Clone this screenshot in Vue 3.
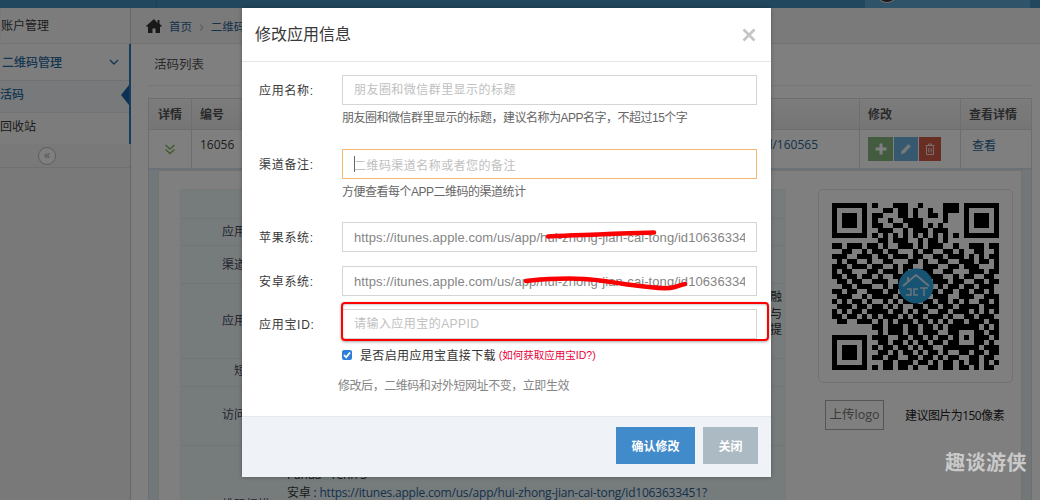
<script setup>
const raw = [
"111111101000111001000011101111111","100000100011011010010011101000001","101110101100011010011010001011101",
"101110111001001111000010001011101","101110101100110111010100001011101","100000100111001011101110001000001",
"111111101010101010101010101111111","000000000110111001011010000000000",
"110111011010011101011100100111011","001100101101100010110011010011001","111001110110111011001101110101011",
"010110010011000110100110011101101","111011101100101100111001101110001","101100011011101011110011000111011",
"110110110100110100011100101100110","011011001110011011101110110011011","001101110010110110110101101101110",
"110110011101101101011011011011010","011100101111011001101110011100111","101011010010101110110110101001101",
"011101101101010011011011011110111","101011011110110101100110111010101","110110101011101011011101001101110",
"011001110101011101101010110111011","000000001101110110110101111110101","111111100101110110111001100011011",
"100000101110011011010110101011101","101110100110110101101101100011010","101110101011011010110011111110111",
"101110100110101101011010011011011","100000101101100110110101100110110","111111100011011101101011010110101",
"111111101011011010011011011010110"
]
const isDark = (r, c) => {
  const finder = (y, x) => {
    const a = r - y, b = c - x
    if (a < -1 || b < -1 || a > 7 || b > 7) return null
    if (a < 0 || b < 0 || a > 6 || b > 6) return false
    return a === 0 || b === 0 || a === 6 || b === 6 || (a > 1 && a < 5 && b > 1 && b < 5)
  }
  for (const f of [finder(0, 0), finder(0, 26), finder(26, 0)]) if (f !== null) return f
  if (r >= 24 && r <= 28 && c >= 24 && c <= 28) {
    return r === 24 || r === 28 || c === 24 || c === 28 || (r === 26 && c === 26)
  }
  return raw[r][c] === "1"
}
const cells = []
for (let r = 0; r < 33; r++) for (let c = 0; c < 33; c++) if (isDark(r, c)) cells.push({ r, c })

const rows = [
  { label: "应用名称", cls: "r1" },
  { label: "渠道备注", cls: "r2" },
  { label: "应用下载", cls: "r3", side: ["融", "与", "提"] },
  { label: "短网址", cls: "r4" },
  { label: "访问统计", cls: "r5" },
]
const urlValue = "https://itunes.apple.com/us/app/hui-zhong-jian-cai-tong/id1063633451?"
</script>

<template>
  <div class="page">
    <div class="topbar">
      <span class="top-line"></span>
      <span class="top-right"><span class="avatar"></span></span>
    </div>
    <div class="shell">
      <aside class="side">
        <div class="nav-head">账户管理</div>
        <div class="nav-group">
          <div class="nav-title">
            <span>二维码管理</span>
            <svg width="10" height="6" viewBox="0 0 10 6"><path d="M1 1l4 4 4-4" fill="none" stroke="#2b6da3" stroke-width="1.400"/></svg>
          </div>
          <div class="nav-sub active">活码</div>
          <div class="nav-sub">回收站</div>
          <span class="nav-arrow"></span>
        </div>
        <div class="collapse"><span class="collapse-btn">«</span></div>
      </aside>
      <main class="main">
        <div class="crumbs">
          <svg width="16" height="14" viewBox="0 0 16 14"><path d="M8 0L0 7l1 1 1-.8V14h4.500V9.500h3V14H14V7.200l1 .8 1-1-2.500-2.200V1h-2v3L8 0z" fill="#333"/></svg>
          <a>首页</a><span class="sep">›</span><a>二维码管理</a>
        </div>
        <div class="content">
          <h3 class="page-title">活码列表</h3>
          <div class="table">
            <div class="tr head">
              <div class="td center">详情</div><div class="td">编号</div><div class="td"></div><div class="td">修改</div><div class="td">查看详情</div>
            </div>
            <div class="tr body">
              <div class="td center">
                <svg width="12" height="11" viewBox="0 0 12 11"><path d="M1.500 1l4.500 4 4.500-4M1.500 5.500l4.500 4 4.500-4" fill="none" stroke="#7fb457" stroke-width="1.400"/></svg>
              </div>
              <div class="td">16056</div>
              <div class="td linkcell"><a>http://d.jct.cn/l/160565</a></div>
              <div class="td actions">
                <span class="act green">
                  <svg width="12" height="12" viewBox="0 0 12 12"><path d="M6 .5v11M.5 6h11" stroke="#fff" stroke-width="3"/></svg>
                </span>
                <span class="act blue">
                  <svg width="12" height="12" viewBox="0 0 12 12"><path d="M1 11l.6-3L8.500 1.100l2.400 2.400L4 10.400 1 11z" fill="#eaf2f8"/></svg>
                </span>
                <span class="act red">
                  <svg width="10" height="12" viewBox="0 0 10 12"><path d="M.5 2.500h9M3.500 2.500V1h3v1.500M1.500 2.500v9h7v-9M3.800 5v4.500M6.200 5v4.500" fill="none" stroke="#f3dcd8" stroke-width="1"/></svg>
                </span>
              </div>
              <div class="td view"><a>查看</a></div>
            </div>
            <div class="detail">
              <div class="detail-inner">
                <div class="info">
                  <div class="info-top"></div>
                  <div v-for="row in rows" :key="row.label" class="info-row" :class="row.cls">
                    <span class="info-label">{{ row.label }}</span>
                    <span v-if="row.side" class="side-text"><i v-for="s in row.side" :key="s">{{ s }}</i></span>
                  </div>
                  <div class="info-row r6">
                    <span class="info-label">二维码扫描</span>
                    <span class="android">
                      <span class="android-line">Panda · Tenn 3</span>
                      <span class="android-line">安卓 : <a>{{ urlValue }}</a></span>
                    </span>
                  </div>
                </div>
                <div class="qr-col">
                  <div class="qr-card">
                    <svg class="qr" width="167" height="167" viewBox="0 0 33 33" shape-rendering="crispEdges">
                      <rect v-for="cell in cells" :key="cell.r + '-' + cell.c" :x="cell.c" :y="cell.r" width="1" height="1" fill="#000"/>
                    </svg>
                    <svg class="qr-logo" width="36" height="36" viewBox="0 0 36 36">
                      <circle cx="18" cy="18" r="17.500" fill="#2fa6e4"/>
                      <path d="M5 18L18 7l13 11M10 14V9" fill="none" stroke="#d5e9f4" stroke-width="1.800"/>
                      <path d="M9 21h4v6H8M20 21h-4v6h4M22 20h8M26 20v8" fill="none" stroke="#d5e9f4" stroke-width="1.500"/>
                    </svg>
                  </div>
                  <div class="upload">
                    <span class="upload-btn">上传logo</span>
                    <span class="upload-hint">建议图片为150像素</span>
                  </div>
                </div>
              </div>
            </div>
          </div>
        </div>
      </main>
    </div>

    <div class="backdrop"></div>
    <div class="modal">
      <div class="modal-head">
        <span class="modal-title">修改应用信息</span>
        <svg class="close" width="14" height="14" viewBox="0 0 14 14"><path d="M1.500 1.500l11 11M12.500 1.500l-11 11" stroke="#c4c4c4" stroke-width="2.600"/></svg>
      </div>
      <div class="modal-body">
        <div class="field f1">
          <label class="lbl">应用名称:</label>
          <div class="ctrl">
            <input class="inp" placeholder="朋友圈和微信群里显示的标题" />
            <p class="help">朋友圈和微信群里显示的标题，建议名称为APP名字，不超过15个字</p>
          </div>
        </div>
        <div class="field f2">
          <label class="lbl">渠道备注:</label>
          <div class="ctrl">
            <div class="inp focus"><span class="caret"></span><span class="ph">二维码渠道名称或者您的备注</span></div>
            <p class="help">方便查看每个APP二维码的渠道统计</p>
          </div>
        </div>
        <div class="field f3">
          <label class="lbl">苹果系统:</label>
          <div class="ctrl"><input class="inp url" :value="urlValue" /></div>
        </div>
        <div class="field f4">
          <label class="lbl">安卓系统:</label>
          <div class="ctrl"><input class="inp url" :value="urlValue" /></div>
        </div>
        <div class="field f5">
          <label class="lbl">应用宝ID:</label>
          <div class="ctrl"><input class="inp" placeholder="请输入应用宝的APPID" /></div>
        </div>
        <div class="check-row">
          <span class="checkbox">
            <svg width="10" height="10" viewBox="0 0 10 10"><path d="M2 5l2.200 2.300L8 2.500" fill="none" stroke="#fff" stroke-width="1.800"/></svg>
          </span>
          <span class="check-text">是否启用应用宝直接下载</span>
          <span class="check-link">(如何获取应用宝ID?)</span>
        </div>
        <p class="note">修改后，二维码和对外短网址不变，立即生效</p>
      </div>
      <div class="modal-foot">
        <button class="btn primary">确认修改</button>
        <button class="btn gray">关闭</button>
      </div>
    </div>

    <div class="highlight"></div>
    <svg class="scribble" width="1040" height="500" viewBox="0 0 1040 500">
      <path d="M548 236.500c30-1.500 45-1.500 60-2.500s30-1 46-1.500" fill="none" stroke="#fb0000" stroke-width="4.500" stroke-linecap="round"/>
      <path d="M526 281c20-2 40-3 58-2s25 3 40 5 32 5 46 4c6-.5 10-3 15-4" fill="none" stroke="#fb0000" stroke-width="4.500" stroke-linecap="round"/>
    </svg>
    <span class="watermark">趣谈游侠</span>
  </div>
</template>

<style>
html, body { margin: 0; overflow: hidden; background: #fff; }
</style>

<style scoped>
.page { position: relative; width: 1040px; height: 500px; overflow: hidden; background: #fff;
  font: 12px "Open Sans", "Noto Sans CJK SC", sans-serif; color: #393939; }
a { color: #2a6496; }
p, h3 { margin: 0; }

.topbar { height: 8px; background: #438fbd; display: flex; justify-content: space-between; overflow: hidden; }
.top-line { width: 1px; height: 8px; margin-left: 156px; background: #3a7da6; }
.top-right { position: relative; width: 165px; margin-right: 10px; background: #5fa8d3; height: 8px; }
.avatar { position: absolute; left: 13px; top: -11px; width: 16px; height: 12px; border-radius: 50%; background: #333; border: 1px solid #ddd; }
.shell { display: flex; height: 492px; }

.side { width: 130px; flex: none; background: #f2f2f2; border-right: 1px solid #ccc; }
.nav-head { height: 35px; line-height: 35px; margin-left: 1px; background: #f8f8f8; border-bottom: 1px solid #e5e5e5; font-size: 12px; white-space: nowrap; }
.nav-group { position: relative; border-right: 2px solid #2b7dbc; margin-right: -1px; }
.nav-title { height: 36px; display: flex; align-items: center; justify-content: space-between; padding: 0 10px 0 2px; background: #fafafa; border-bottom: 1px solid #e5e5e5; color: #2b6da3; font-weight: 500; }
.nav-sub { height: 31px; line-height: 28px; margin-left: -3px; padding-left: 3px; background: #f9f9f9; white-space: nowrap; overflow: hidden; }
.nav-sub.active { background: #eef3f7; color: #2b6da3; font-weight: 500; border-bottom: 1px dotted #d8dfe5; }
.nav-arrow { position: absolute; right: 0; top: 41px; border: 10.500px solid transparent; border-right: 8px solid #1963aa; border-left: 0; }
.collapse { height: 23px; display: flex; align-items: center; justify-content: center; background: #f3f3f3; border-bottom: 1px solid #e0e0e0; padding-right: 36px; }
.collapse-btn { width: 16px; height: 16px; line-height: 13px; border: 1px solid #bbb; border-radius: 50%; background: #fff; color: #aaa; text-align: center; font-size: 13px; }

.main { flex: 1; min-width: 0; }
.crumbs { height: 35px; display: flex; align-items: center; gap: 7px; padding-left: 15px; background: #f5f5f5; border-bottom: 1px solid #e5e5e5; font-size: 11.500px; white-space: nowrap; }
.sep { color: #bbb; font-size: 16px; }
.content { padding: 0 8px 0 17px; }
.page-title { height: 41px; line-height: 42px; font-size: 12.500px; font-weight: 400; color: #555; border-bottom: 1px dotted #e2e2e2; margin: 0 0 12px; padding-left: 6px; }

.table { border: 1px solid #ddd; }
.tr { display: grid; grid-template-columns: 42px 60px 1fr 101px 71px; }
.tr.head { height: 30px; background: linear-gradient(#f8f8f8, #ececec); border-bottom: 1px solid #ddd; font-weight: 600; color: #555; }
.tr.body { height: 38px; background: #fff; }
.td { padding: 0 8px; border-left: 1px solid #ddd; display: flex; align-items: center; white-space: nowrap; overflow: hidden; }
.td:first-child { border-left: 0; }
.td.center { justify-content: center; padding: 0; }
.tr.body .td { align-items: flex-start; padding-top: 6px; }
.tr.body .td.center { align-items: center; padding-top: 0; }
.linkcell { justify-content: flex-end; padding-right: 41px !important; }
.td.actions { gap: 1px; padding: 7px 0 0 8px !important; }
.td.view { padding-left: 11px; }
.act { height: 24px; display: flex; align-items: center; justify-content: center; box-sizing: border-box; }
.act.green { width: 25px; background: #87b87f; }
.act.blue { width: 24px; background: #6fb3e0; }
.act.red { width: 22px; background: #d15b47; }

.detail { border-top: 2px solid #d4e4ee; background: #e4eff5; padding: 0 9px; }
.detail-inner { height: 340px; background: #fff; border: 1px solid #e4e4e4; border-bottom: 0; padding: 18px 0 0 21px; display: flex; }
.info { width: 606px; flex: none; background: #edf6f8; border: 1px solid #f0f0f0; border-bottom: 0; height: 322px; box-sizing: border-box; }
.info-top { height: 28px; border-bottom: 1px solid #e4e9ec; }
.info-row { display: flex; align-items: center; justify-content: space-between; padding-bottom: 2px; border-bottom: 1px solid #e4e9ec; box-sizing: border-box; color: #4a4a62; }
.info-label { width: 89px; text-align: right; flex: none; }
.r1 { height: 27px; } .r2 { height: 38px; } .r3 { height: 75px; }
.r4 { height: 28px; padding-bottom: 6px; }
.r5 { height: 59px; padding-bottom: 4px; }
.r6 { height: 70px; padding-bottom: 0; border: 0; align-items: flex-start; justify-content: flex-start; }
.r6 .info-label { margin-top: 49px; }
.android { display: flex; flex-direction: column; margin: 21px 0 0 17px; line-height: 16px; letter-spacing: -.2px; white-space: nowrap; color: #393939; }
.android-line { height: 18px; }
.side-text { display: flex; flex-direction: column; margin: -12px 3px 0 0; font-size: 12px; line-height: 16.500px; color: #333; }
.side-text i { font-style: normal; }

.qr-col { width: 195px; margin-left: 32px; flex: none; }
.qr-card { position: relative; height: 194px; box-sizing: border-box; background: #fff; border: 1px solid #e4e4e4; border-radius: 5px; display: flex; align-items: center; justify-content: center; }
.qr { filter: blur(.4px); }
.qr-logo { position: absolute; left: 79px; top: 78px; }
.upload { display: flex; align-items: center; gap: 21px; margin: 17px 0 0 7px; }
.upload-btn { width: 57px; height: 28px; line-height: 28px; text-align: center; font-size: 12.500px; border: 1px solid #aaa; color: #777; }
.upload-hint { white-space: nowrap; font-size: 12px; color: #222; letter-spacing: -.55px; }

.backdrop { position: absolute; inset: 0; background: rgba(0, 0, 0, .5); }

.modal { position: absolute; left: 242px; top: 8px; width: 529px; height: 469px; background: #fff; display: flex; flex-direction: column; box-shadow: 0 0 4px rgba(0,0,0,.3);
  font-family: "Liberation Sans", "Noto Sans CJK SC", sans-serif; }
.modal-head { height: 54px; flex: none; box-sizing: border-box; border-bottom: 1px solid #e5e5e5; display: flex; align-items: center; justify-content: space-between; padding: 0 15px 4px 13px; }
.modal-title { font-size: 16px; color: #393939; }
.close { margin-top: 4px; }
.modal-body { flex: 1; padding-top: 13px; }
.field { display: flex; }
.lbl { width: 100px; flex: none; padding-left: 17px; box-sizing: border-box; line-height: 32px; font-size: 12px; letter-spacing: .7px; color: #393939; }
.ctrl { width: 415px; }
.inp { display: block; width: 415px; height: 30px; box-sizing: border-box; border: 1px solid #d5d5d5; padding: 0 11px; font: 12px "Liberation Sans", "Noto Sans CJK SC", sans-serif; color: #858585; background: #fff; outline: 0; letter-spacing: .45px; border-radius: 0; }
.inp::placeholder { color: #c0c0c0; opacity: 1; }
.inp.url { font-size: 13px; letter-spacing: .08px; }
.inp.focus { border-color: #f5b771; display: flex; align-items: center; position: relative; }
.caret { position: absolute; left: 11px; top: 6px; width: 1px; height: 16px; background: #666; }
.ph { color: #c0c0c0; }
.help { margin-top: 5px; height: 17px; line-height: 17px; font-size: 12px; letter-spacing: -.5px; color: #666; white-space: nowrap; }
.f1 { height: 74px; }
.f2 { height: 73px; }
.f3 { height: 44px; }
.f4 { height: 43px; }
.f5 { height: 40px; }
.check-row { display: flex; align-items: center; margin-left: 100px; height: 11px; }
.checkbox { width: 10px; height: 10px; background: #2d7fd8; border-radius: 2px; display: flex; }
.check-text { margin-left: 8px; font-size: 12px; letter-spacing: .35px; color: #333; white-space: nowrap; }
.check-link { margin-left: 3px; font-size: 10.500px; color: #e8003a; white-space: nowrap; }
.note { margin: 17px 0 0 96px; line-height: 18px; color: #858585; font-size: 12px; white-space: nowrap; letter-spacing: -.45px; }
.modal-foot { height: 61px; flex: none; box-sizing: border-box; background: #eff3f8; border-top: 1px solid #e4e9ee; display: flex; justify-content: flex-end; align-items: flex-start; gap: 8px; padding: 10px 13px 0 0; }
.btn { height: 37px; border: 0; padding: 0; font: 600 12px "Liberation Sans", "Noto Sans CJK SC", sans-serif; color: #fff; }
.btn.primary { width: 79px; background: #428bca; }
.btn.gray { width: 55px; background: #abbac3; }

.highlight { position: absolute; left: 341px; top: 302px; width: 424px; height: 35px; border: 2.500px solid #f00; border-radius: 4px; box-shadow: 0 1px 3px rgba(0,0,0,.35), inset 0 1px 2px rgba(0,0,0,.2); }
.scribble { position: absolute; left: 0; top: 0; pointer-events: none; }
.watermark { position: absolute; left: 945px; top: 451px; font-size: 20px; font-weight: 700; line-height: 24px; color: #c9c9c9; letter-spacing: .5px; white-space: nowrap; }
</style>
